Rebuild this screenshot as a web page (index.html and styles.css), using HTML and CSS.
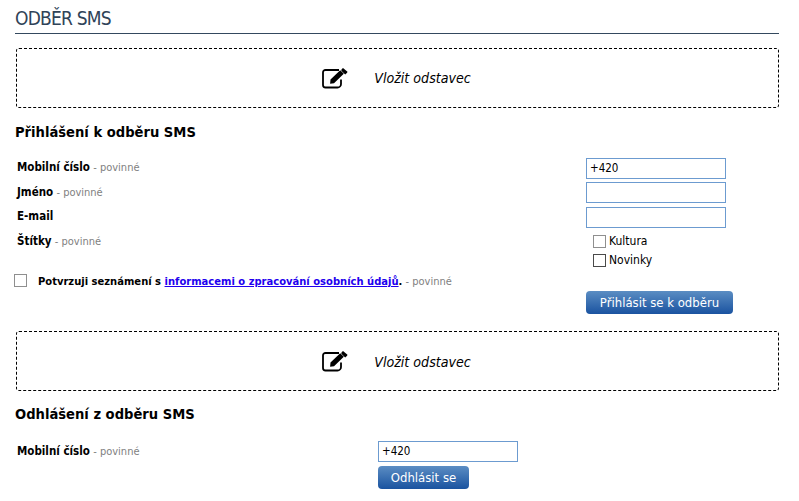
FILE: index.html
```html
<!DOCTYPE html>
<html lang="cs">
<head>
<meta charset="utf-8">
<title>Odběr SMS</title>
<link rel="stylesheet" href="styles.css">
</head>
<body>
<main class="page">
  <h1 class="title">ODBĚR SMS</h1>
  <div class="placeholder placeholder-first">
    <svg class="edit-icon" viewBox="0 0 26 21" width="26" height="21" aria-hidden="true">
      <path d="M19 11.5v4.5a3.5 3.5 0 0 1-3.5 3.5h-12a2.5 2.5 0 0 1-2.5-2.5v-12.500a2.500 2.500 0 0 1 2.500-2.500h13.500" fill="none" stroke="#000" stroke-width="1.800"/>
      <path d="M8.500 11.500 18.200 2.300l3.600 3.500-9.800 9.400-3.900.5z M19.600 1.200l1.400-1.200 4.500 3.800-.4 1-1.900 1.700-3.900-3.700z" fill="#000"/>
    </svg>
    <span>Vložit odstavec</span>
  </div>
  <h2 class="subtitle subtitle-first">Přihlášení k odběru SMS</h2>
  <form class="form">
    <div class="row row-first">
      <label class="label"><b>Mobilní číslo</b> <span class="req">- povinné</span></label>
      <input class="field" type="text" value="+420">
    </div>
    <div class="row">
      <label class="label"><b>Jméno</b> <span class="req">- povinné</span></label>
      <input class="field" type="text">
    </div>
    <div class="row">
      <label class="label"><b>E-mail</b></label>
      <input class="field" type="text">
    </div>
    <div class="row row-tags">
      <label class="label"><b>Štítky</b> <span class="req">- povinné</span></label>
      <div class="tags">
        <div class="tag"><span class="box box-light"></span>Kultura</div>
        <div class="tag"><span class="box box-dark"></span>Novinky</div>
      </div>
    </div>
    <div class="consent">
      <span class="box box-light"></span>
      <span class="consent-text"><b>Potvrzuji seznámení s <a href="#">informacemi o zpracování osobních údajů</a>.</b> <span class="req">- povinné</span></span>
    </div>
    <div class="actions"><button class="btn btn-wide" type="button">Přihlásit se k odběru</button></div>
  </form>
  <div class="placeholder placeholder-second">
    <svg class="edit-icon" viewBox="0 0 26 21" width="26" height="21" aria-hidden="true">
      <path d="M19 11.5v4.5a3.5 3.5 0 0 1-3.5 3.5h-12a2.5 2.5 0 0 1-2.5-2.5v-12.500a2.500 2.500 0 0 1 2.500-2.500h13.500" fill="none" stroke="#000" stroke-width="1.800"/>
      <path d="M8.500 11.500 18.200 2.300l3.600 3.500-9.800 9.400-3.900.5z M19.600 1.200l1.400-1.200 4.500 3.800-.4 1-1.900 1.700-3.900-3.700z" fill="#000"/>
    </svg>
    <span>Vložit odstavec</span>
  </div>
  <h2 class="subtitle subtitle-second">Odhlášení z odběru SMS</h2>
  <form class="form form-out">
    <div class="row-out">
      <label class="label"><b>Mobilní číslo</b> <span class="req">- povinné</span></label>
      <div class="out-controls">
        <input class="field" type="text" value="+420">
        <button class="btn btn-narrow" type="button">Odhlásit se</button>
      </div>
    </div>
  </form>
</main>
</body>
</html>
```
FILE: styles.css
```css
* { box-sizing: border-box; }
html, body { margin: 0; padding: 0; background: #fff; }
body { font-family: "DejaVu Sans Condensed", "DejaVu Sans", Verdana, sans-serif; font-stretch: condensed; font-size: 11px; color: #000; overflow: hidden; }
.page { width: 799px; height: 501px; padding: 0 20px 0 15px; }
.title { margin: 0; height: 34px; padding-top: 7px; font-size: 19px; line-height: 22px; font-weight: 400; letter-spacing: -.8px; color: #2f4358; border-bottom: 1px solid #34495e; }
.placeholder { margin-left: 1px; height: 60px; border: 1px dashed #000; border-radius: 3px; display: flex; align-items: center; justify-content: center; gap: 26px; padding-right: 2px; font-size: 14.1px; font-style: italic; }
.placeholder-first { margin-top: 14px; }
.placeholder-second { margin-top: 17px; padding-top: 2px; }
.edit-icon { flex: none; }
.subtitle { margin: 0; font-size: 14.6px; line-height: 18px; font-weight: 700; }
.subtitle-first { margin-top: 15px; }
.subtitle-second { margin-top: 14px; }
.form { display: block; }
.row { display: flex; justify-content: space-between; height: 24.5px; padding-left: 2px; padding-right: 53px; }
.row .field { margin-top: -.4px; }
.row-first { margin-top: 17px; }
.row-tags { height: 38px; }
.label { font-size: 11.5px; line-height: 18px; }
.req { color: #7f7f7f; font-size: 11px; }
.field { width: 140px; height: 21px; padding: 0 3px; border: 1px solid #6c9bd0; background: #fff; font: 11.5px/19px "DejaVu Sans Condensed", "DejaVu Sans", Verdana, sans-serif; font-stretch: condensed; color: #000; outline: none; }
.tags { width: 140px; padding-left: 7px; }
.tag { display: flex; align-items: center; gap: 3px; height: 19px; font-size: 12px; }
.box { display: block; width: 13px; height: 13px; flex: none; background: #fff; }
.box-light { border: 1px solid #8f8f8f; }
.box-dark { border: 1px solid #4a4a4a; }
.consent { display: flex; align-items: center; gap: 11px; margin-top: 2px; margin-left: -1px; height: 18px; }
.consent-text { font-size: 11.1px; padding-top: 2px; }
.consent a { color: #2200ee; }
.actions { display: flex; justify-content: flex-end; padding-right: 46px; margin-top: 1px; }
.btn { height: 23px; padding: 0; border: 0; border-radius: 4px; background: linear-gradient(#5b8dc3, #1a53a0); color: #fff; font: 13px "DejaVu Sans Condensed", "DejaVu Sans", Verdana, sans-serif; font-stretch: condensed; }
.btn-wide { width: 147px; }
.btn-narrow { width: 91px; margin-top: 4px; display: block; }
.row-out { display: flex; padding-left: 2px; margin-top: 18px; }
.row-out .label { width: 361px; flex: none; padding-top: 1px; }
.out-controls { display: block; }
```
